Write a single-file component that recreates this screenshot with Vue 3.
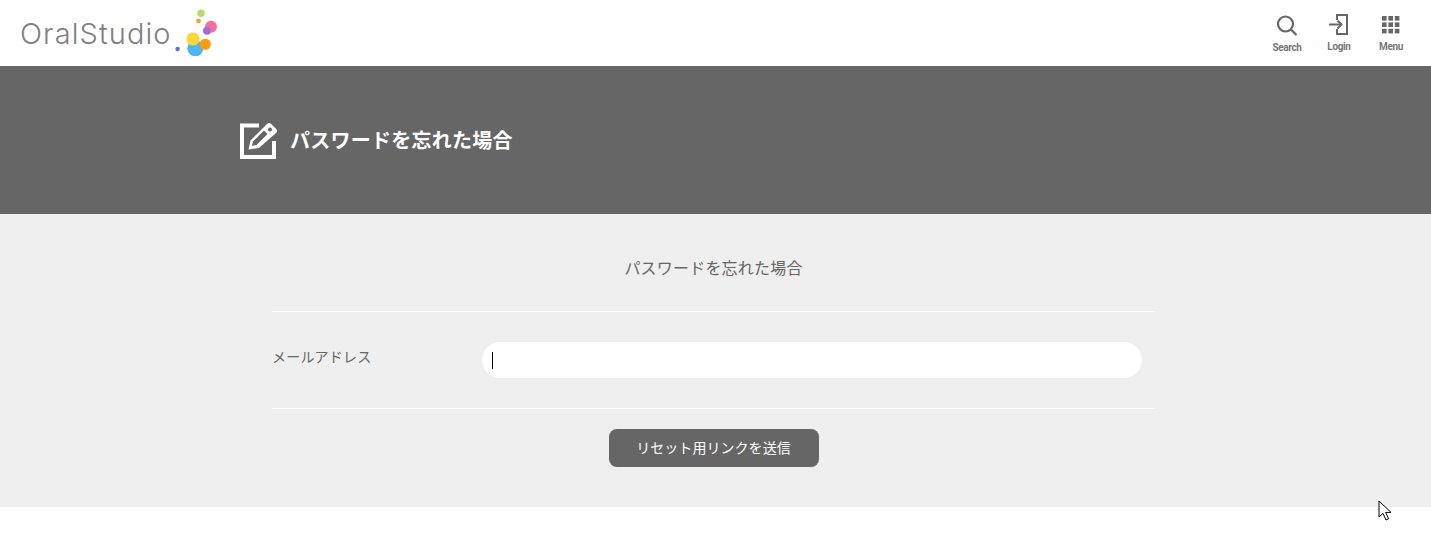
<template>
  <div class="page">
    <header class="site-header">
      <a class="logo">
        <span class="logo-text">OralStudio</span>
        <svg class="logo-dots" width="44" height="48" viewBox="0 0 44 48">
          <circle cx="27" cy="5.3" r="3.7" fill="#b5dc6c" />
          <circle cx="24.5" cy="13" r="2.4" fill="#f4a62e" />
          <circle cx="37" cy="18.7" r="6" fill="#f4709a" />
          <circle cx="33" cy="22.7" r="4" fill="#a66bd6" />
          <circle cx="21.3" cy="40.3" r="8" fill="#4cb6f5" />
          <circle cx="31.3" cy="36.3" r="5.6" fill="#fb9c10" />
          <circle cx="19" cy="31" r="6.6" fill="#fbd83a" />
          <circle cx="3.6" cy="41" r="2.3" fill="#5b78dc" />
        </svg>
      </a>
      <nav class="header-nav">
        <a class="nav-item nav-search">
          <svg width="22" height="22" viewBox="0 0 22 22" fill="none" stroke="#666" stroke-width="2.2">
            <circle cx="9.5" cy="9" r="7.5" />
            <path d="M15 14.5l5.5 5.5" />
          </svg>
          <span>Search</span>
        </a>
        <a class="nav-item nav-login">
          <svg width="22" height="22" viewBox="0 0 22 22" fill="none" stroke="#666" stroke-width="2">
            <path d="M9 6V1h10v19H9v-5" />
            <path d="M1 10.5h12" />
            <path d="M9.5 6.5l4 4-4 4" />
          </svg>
          <span>Login</span>
        </a>
        <a class="nav-item nav-menu">
          <svg width="22" height="22" viewBox="0 0 22 22" fill="#666">
            <rect v-for="cell in menuCells" :key="cell.id" :x="cell.x" :y="cell.y" width="4.6" height="4.6" />
          </svg>
          <span>Menu</span>
        </a>
      </nav>
    </header>

    <section class="banner">
      <svg class="banner-icon" width="40" height="40" viewBox="0 0 40 40" fill="none">
        <path d="M19 5.5H2V37h32V21" stroke="#fff" stroke-width="4" />
        <path d="M8.5 29.5l2-9L27 4a3 3 0 0 1 4.2 0l4.8 4.8a3 3 0 0 1 0 4.2L19 28z" fill="#fff" />
        <path d="M13 21.5L24 10.5l3.5 3.5L16.5 25l-4.5 1z" fill="#666" />
        <circle cx="30" cy="9.5" r="2" fill="#666" />
      </svg>
      <h1>パスワードを忘れた場合</h1>
    </section>

    <main class="content">
      <div class="form-wrap">
        <h2>パスワードを忘れた場合</h2>
        <div class="form-row">
          <label for="email">メールアドレス</label>
          <div class="input-wrap">
            <input id="email" type="text" />
            <span class="caret"></span>
          </div>
        </div>
        <div class="actions">
          <button type="button">リセット用リンクを送信</button>
        </div>
      </div>
    </main>

    <svg class="mouse" width="14" height="22" viewBox="0 0 14 22">
      <path d="M1 1v16l4-3.6 3 6.6 2.6-1.2-3-6.4H13z" fill="#fff" stroke="#000" stroke-width="1" />
    </svg>
  </div>
</template>

<script setup>
const menuCells = []
for (let row = 0; row < 3; row++) {
  for (let col = 0; col < 3; col++) {
    menuCells.push({ id: row * 3 + col, x: 2 + col * 6.4, y: 2 + row * 6.4 })
  }
}
</script>

<style>
html,
body {
  margin: 0;
  background: #fff;
}
</style>

<style scoped>
.page {
  position: relative;
  height: 548px;
  overflow: hidden;
  font-family: "Noto Sans CJK JP", "Noto Sans", sans-serif;
  color: #666;
}
.site-header {
  height: 66px;
  display: flex;
  justify-content: space-between;
  background: #fff;
}
.logo {
  display: flex;
  align-items: flex-start;
  padding-left: 20px;
}
.logo-text {
  width: 154px;
  margin-top: 14px;
  font-family: Inter, sans-serif;
  font-weight: 300;
  font-size: 29px;
  line-height: 40px;
  color: #808080;
  letter-spacing: 1.1px;
  white-space: nowrap;
}
.logo-dots {
  margin: 8px 0 0 0;
}
.header-nav {
  display: flex;
  padding: 14px 14px 0 0;
}
.nav-item {
  width: 52px;
  display: flex;
  flex-direction: column;
  align-items: center;
  font-family: Roboto, sans-serif;
  font-size: 10px;
  font-weight: 700;
  line-height: 12px;
  letter-spacing: -0.35px;
  color: #777;
}
.nav-item span {
  margin-top: 5px;
}
.nav-search {
  margin-top: 1px;
}
.banner {
  height: 146px;
  padding-bottom: 2px;
  display: flex;
  align-items: center;
  gap: 10px;
  padding-left: 240px;
  background: #666;
}
.banner-icon {
  margin-top: 2px;
}
.banner h1 {
  margin: 0;
  font-size: 20px;
  font-weight: 700;
  letter-spacing: 0.25px;
  color: #fff;
}
.content {
  height: 293px;
  padding-right: 4px;
  background: #efefef;
}
.form-wrap {
  width: 883px;
  margin: 0 auto;
}
.form-wrap h2 {
  margin: 0;
  padding-top: 41px;
  height: 56px;
  border-bottom: 1px solid #fff;
  font-size: 16px;
  font-weight: 400;
  line-height: 24px;
  text-align: center;
  letter-spacing: 0.2px;
}
.form-row {
  display: flex;
  height: 97px;
  padding-top: 30px;
  box-sizing: border-box;
  border-bottom: 1px solid #fff;
}
.form-row label {
  width: 210px;
  font-size: 14px;
  line-height: 28px;
  letter-spacing: 0.2px;
}
.input-wrap {
  position: relative;
  width: 660px;
  height: 36px;
}
.input-wrap input {
  display: block;
  width: 100%;
  height: 100%;
  padding: 0 10px;
  box-sizing: border-box;
  border: 0;
  border-radius: 18px;
  background: #fff;
  outline: none;
  caret-color: transparent;
}
.caret {
  position: absolute;
  left: 10px;
  top: 10px;
  width: 1px;
  height: 17px;
  background: #000;
}
.actions {
  display: flex;
  justify-content: center;
  padding-top: 20px;
}
.actions button {
  width: 210px;
  height: 38px;
  padding: 0 0 3px;
  border: 0;
  border-radius: 8px;
  background: #666;
  color: #fff;
  font-family: inherit;
  font-size: 14px;
  letter-spacing: 0.05px;
}
.mouse {
  position: absolute;
  left: 1378px;
  top: 500px;
}
</style>
